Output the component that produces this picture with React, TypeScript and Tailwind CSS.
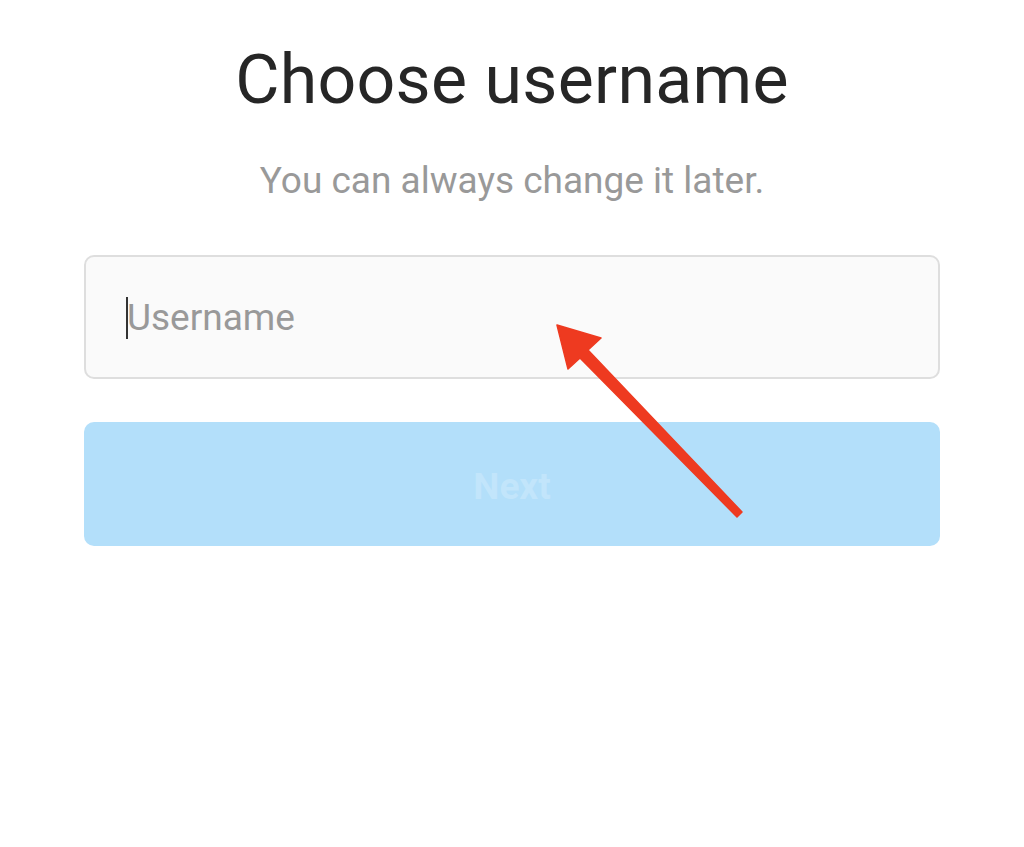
import React from 'react';

const Arrow: React.FC = () => (
  <svg
    className="pointer-events-none absolute left-0 top-0"
    width="1024"
    height="847"
    viewBox="0 0 1024 847"
  >
    <polygon
      points="557,325 601,338 588,350 742,512 737,517 580,358 568,369"
      fill="#ee3a20"
      stroke="#ee3a20"
      strokeWidth="1.5"
      strokeLinejoin="round"
    />
  </svg>
);

const App: React.FC = () => {
  return (
    <div className="relative h-[847px] w-[1024px] overflow-hidden bg-white font-['Roboto',sans-serif]">
      <div className="flex flex-col items-center px-[84px]">
        <h1 className="mt-[35px] text-[68px] leading-[90px] font-normal tracking-[0.3px] text-[#262626]">Choose username</h1>
        <p className="mt-[34px] text-[37px] leading-[44px] text-[#999999]">You can always change it later.</p>

        <div className="mt-[52px] flex h-[124px] w-full items-center rounded-[10px] border-2 border-[#dedede] bg-[#fafafa] pl-[40px]">
          <span className="mt-[2px] h-[42px] w-[2px] bg-[#333333]" />
          <span className="mt-[2px] -ml-[1px] text-[37px] text-[#999999]">Username</span>
        </div>

        <button className="mt-[43px] flex h-[124px] w-full items-center justify-center rounded-[10px] bg-[#b3dffa] pt-[6px] text-[37px] font-bold text-[#c2e5fb]">
          Next
        </button>
      </div>
      <Arrow />
    </div>
  );
};

export default App;
